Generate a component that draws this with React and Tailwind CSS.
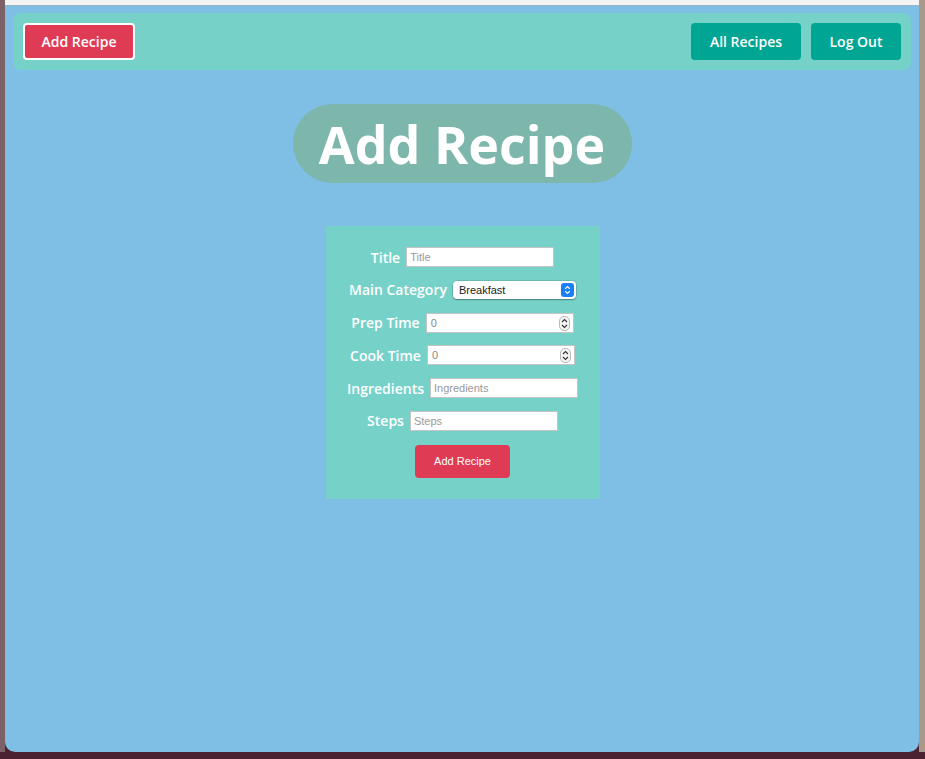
import React from 'react';

const font = { fontFamily: '"Open Sans", "Noto Sans", sans-serif' };
const uiFont = { fontFamily: '"Liberation Sans", Arial, sans-serif' };

// kleine Pfeile rechts im Zahlenfeld
function Spinner() {
  return (
    <span className="absolute right-[3px] top-[2px] flex h-[15px] w-[11px] flex-col items-center justify-center rounded-[5px] border border-[#b9b9b9] bg-[#f4f4f4]">
      <svg width="7" height="11" viewBox="0 0 7 11">
        <path d="M1 4 L3.5 1.5 L6 4" fill="none" stroke="#333" strokeWidth="1.1" />
        <path d="M1 7 L3.5 9.5 L6 7" fill="none" stroke="#333" strokeWidth="1.1" />
      </svg>
    </span>
  );
}

function TextField({ placeholder }) {
  return (
    <input
      type="text"
      placeholder={placeholder}
      className="h-[20px] w-[148px] border border-[#c4c4c4] bg-white px-[3px] text-[11px] text-[#333] outline-none placeholder:text-[#9a9a9a]"
      style={uiFont}
    />
  );
}

function NumberField() {
  return (
    <div className="relative h-[20px] w-[148px] border border-[#c4c4c4] bg-white" style={uiFont}>
      <span className="absolute left-[4px] top-[3px] text-[11px] leading-[13px] text-[#8a8a8a]">0</span>
      <Spinner />
    </div>
  );
}

function SelectField() {
  return (
    <div
      className="relative flex h-[18px] w-[123px] items-center rounded-[4px] bg-white pl-[6px] text-[11px] text-[#222] shadow-[0_0_0_0.5px_rgba(0,0,0,0.2),0_1px_1.5px_rgba(0,0,0,0.3)]"
      style={uiFont}
    >
      Breakfast
      <span className="absolute right-[2px] top-[2px] flex h-[14px] w-[13px] items-center justify-center rounded-[3px] bg-[#1d7ff6]">
        <svg width="7" height="10" viewBox="0 0 7 10">
          <path d="M1.2 3.8 L3.5 1.5 L5.8 3.8" fill="none" stroke="#fff" strokeWidth="1.2" />
          <path d="M1.2 6.2 L3.5 8.5 L5.8 6.2" fill="none" stroke="#fff" strokeWidth="1.2" />
        </svg>
      </span>
    </div>
  );
}

function Row({ label, children }) {
  return (
    <div className="flex h-[20px] items-center justify-center gap-[6px]">
      <label className="text-[14px] font-semibold text-white" style={font}>{label}</label>
      {children}
    </div>
  );
}

export default function App() {
  return (
    <div className="flex h-[759px] w-[925px] overflow-hidden bg-[#4a2231]">
      {/* linker Rand */}
      <div className="h-[752px] w-[5px] bg-[#7c6266]" />

      {/* Fenster */}
      <div className="flex h-[752px] w-[914px] flex-col">
        <div className="h-[6px] border-b border-[#9bb5c8] bg-[#f4f4f4]" />
        <div className="flex flex-1 flex-col items-center rounded-b-[10px] bg-[#7fbee5] px-[8px] pt-[7px]" style={font}>
          {/* Navigation */}
          <nav className="flex h-[57px] w-full items-center justify-between rounded-[8px] bg-[#76d2c9] px-[10px]">
            <button className="h-[37px] w-[112px] rounded-[4px] border-2 border-white bg-[#df3b55] text-[14px] font-semibold text-white">
              Add Recipe
            </button>
            <div className="flex gap-[10px]">
              <button className="h-[37px] w-[110px] rounded-[4px] bg-[#00a594] text-[14px] font-semibold text-white">
                All Recipes
              </button>
              <button className="h-[37px] w-[90px] rounded-[4px] bg-[#00a594] text-[14px] font-semibold text-white">
                Log Out
              </button>
            </div>
          </nav>

          {/* Überschrift */}
          <h1 className="mt-[34px] flex h-[79px] w-[339px] items-center justify-center rounded-full bg-[#7db6ab] text-[52px] font-bold text-white">
            Add Recipe
          </h1>

          {/* Formular */}
          <form className="ml-[1px] mt-[43px] flex w-[274px] flex-col items-center gap-[12.8px] bg-[#76d2c9] pb-[21px] pt-[21px]">
            <Row label="Title"><TextField placeholder="Title" /></Row>
            <Row label="Main Category"><SelectField /></Row>
            <Row label="Prep Time"><NumberField /></Row>
            <Row label="Cook Time"><NumberField /></Row>
            <Row label="Ingredients"><TextField placeholder="Ingredients" /></Row>
            <Row label="Steps"><TextField placeholder="Steps" /></Row>
            <button
              type="button"
              className="mt-[1px] h-[33px] w-[95px] rounded-[4px] bg-[#df3b55] text-[11px] text-white"
              style={uiFont}
            >
              Add Recipe
            </button>
          </form>
        </div>
      </div>

      {/* rechter Rand */}
      <div className="h-[752px] w-[6px] bg-[#a8998b]" />
    </div>
  );
}
